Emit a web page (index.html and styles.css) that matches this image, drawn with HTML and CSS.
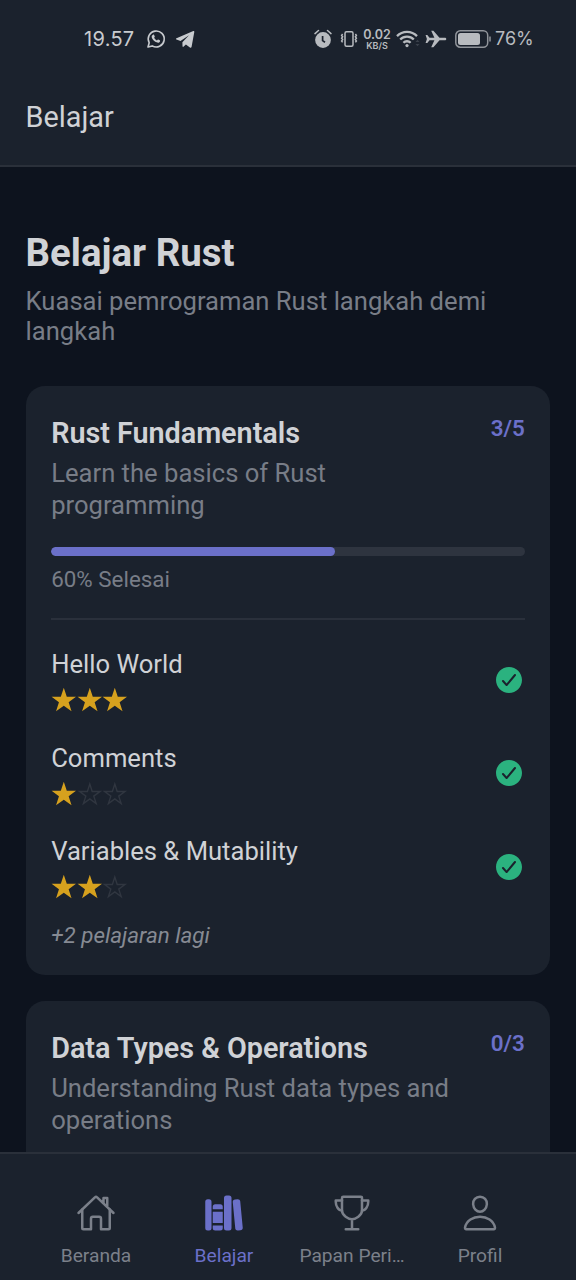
FILE: index.html
```html
<!DOCTYPE html>
<html lang="id">
<head>
<meta charset="utf-8">
<title>Belajar</title>
<link rel="stylesheet" href="styles.css">
</head>
<body>
<svg class="defs" aria-hidden="true">
  <symbol id="star" viewBox="0 0 512 512"><path fill="currentColor" d="M256 16l60 180h184L353 306l58 180L256 374 101 486l58-180L12 196h184z"/></symbol>
  <symbol id="star-o" viewBox="0 0 512 512"><path fill="none" stroke="currentColor" stroke-width="28" d="M256 60l48 150h156L335 302l49 150L256 358l-128 94 49-150L52 210h156z"/></symbol>
  <symbol id="check" viewBox="0 0 512 512"><path fill="currentColor" d="M256 48C141.310 48 48 141.310 48 256s93.310 208 208 208 208-93.310 208-208S370.690 48 256 48zm108.250 138.290l-134.400 160a16 16 0 01-12 5.710h-.27a16 16 0 01-11.890-5.300l-57.600-64a16 16 0 1123.780-21.400l45.290 50.320 122.590-145.910a16 16 0 0124.500 20.580z"/></symbol>
</svg>
<div class="screen">
  <div class="status">
    <div class="status-left">
      <span class="clock">19.57</span>
      <svg class="whatsapp" viewBox="0 0 20 20" width="20" height="20"><path d="M2 18l1.2-4.2A8 8 0 1 1 6.200 16.900z" fill="none" stroke="currentColor" stroke-width="1.6" stroke-linejoin="round"/><path d="M7 5.700c.5-.3.900-.2 1.100.2l.7 1.600c.1.400-.5.900-.7 1.200.6 1.200 1.600 2.200 2.900 2.700.4-.3.800-1 1.200-.9l1.600.8c.4.200.4.600.2 1.100-.5 1-1.600 1.500-2.700 1.200-2.900-.8-4.900-2.800-5.600-5.400-.2-1 .4-2 1.300-2.500z" fill="currentColor"/></svg>
      <svg class="telegram" viewBox="0 0 20 18" width="20" height="18"><path d="M18.300 1L1.500 8.300c-.8.400-.7.900 0 1.200l4 1.400L14 5.200l-6.600 7 .1 4c.1.800.7.900 1.200.4l2.200-2.100 4 2.900c.8.500 1.500.2 1.700-.7L19.300 1.900c.1-.8-.3-1.200-1-.9z" fill="currentColor"/></svg>
    </div>
    <div class="status-right">
      <svg class="alarm" viewBox="0 0 18 20" width="18" height="20"><circle cx="9" cy="11" r="7.900" fill="currentColor"/><path d="M1 4.600L4.500 1.500M17 4.600L13.500 1.500" stroke="currentColor" stroke-width="1.500" stroke-linecap="round"/><path d="M8.600 7v4.600l2.400 1.700" fill="none" stroke="#1b222d" stroke-width="1.700"/></svg>
      <svg class="vibrate" viewBox="0 0 18 18" width="18" height="18" fill="none" stroke="currentColor"><rect x="5" y="1.700" width="8" height="14.600" rx="1.500" stroke-width="1.500"/><path d="M2.600 4l-1 1.400 1 1.400-1 1.400 1 1.400-1 1.400 1 1.400M15.400 4l1 1.400-1 1.400 1 1.400-1 1.400 1 1.400-1 1.400" stroke-width="1.500"/></svg>
      <div class="speed"><span class="rate">0.02</span><span class="unit">KB/S</span></div>
      <svg class="wifi" viewBox="0 0 24 20" width="24" height="20" fill="none" stroke="currentColor" stroke-width="2.300"><path d="M1 7.100a14 14 0 0 1 20 0M4.200 10.500a9.500 9.500 0 0 1 13.600 0M7.400 13.800a5 5 0 0 1 7.200 0"/><circle cx="11" cy="16.600" r="1.600" fill="currentColor" stroke="none"/><path d="M19.500 13l2-2.200 2 2.200zM19.500 15l2 2.200 2-2.200z" fill="#3a414b" stroke="none"/></svg>
      <svg class="plane" viewBox="0 0 22 18" width="22" height="18"><path d="M21.300 9c0-.9-.7-1.300-1.600-1.300h-5.200L8.400.7H6.200l3.200 7H4.500L2.300 5.100H.600L1.900 9 .6 12.900h1.700l2.200-2.600h4.900l-3.200 7h2.200l6.100-7h5.200c.9 0 1.600-.4 1.600-1.300z" fill="currentColor"/></svg>
      <svg class="battery" viewBox="0 0 36 18" width="36" height="18"><rect x=".8" y=".8" width="31.900" height="16.400" rx="4.500" fill="none" stroke="currentColor" stroke-width="1.500" opacity=".75"/><rect x="3" y="3" width="22" height="12" rx="2.500" fill="currentColor"/><path d="M35 6.500v5" stroke="currentColor" stroke-width="1.500" opacity=".75"/></svg>
      <span class="percent">76%</span>
    </div>
  </div>
  <header class="appbar">Belajar</header>
  <main class="content">
    <h1 class="title">Belajar Rust</h1>
    <p class="subtitle">Kuasai pemrograman Rust langkah demi langkah</p>
    <section class="card">
      <div class="card-head">
        <div class="card-text">
          <h2 class="card-title">Rust Fundamentals</h2>
          <p class="card-desc">Learn the basics of Rust<br>programming</p>
        </div>
        <span class="count">3/5</span>
      </div>
      <div class="track"><div class="fill" style="width:60%"></div></div>
      <p class="progress">60% Selesai</p>
      <div class="lessons">
        <div class="lesson">
          <div class="lesson-info"><span class="lesson-name">Hello World</span>
            <div class="stars"><svg><use href="#star"/></svg><svg><use href="#star"/></svg><svg><use href="#star"/></svg></div></div>
          <svg class="check"><use href="#check"/></svg>
        </div>
        <div class="lesson">
          <div class="lesson-info"><span class="lesson-name">Comments</span>
            <div class="stars"><svg><use href="#star"/></svg><svg class="off"><use href="#star-o"/></svg><svg class="off"><use href="#star-o"/></svg></div></div>
          <svg class="check"><use href="#check"/></svg>
        </div>
        <div class="lesson">
          <div class="lesson-info"><span class="lesson-name">Variables &amp; Mutability</span>
            <div class="stars"><svg><use href="#star"/></svg><svg><use href="#star"/></svg><svg class="off"><use href="#star-o"/></svg></div></div>
          <svg class="check"><use href="#check"/></svg>
        </div>
      </div>
      <p class="more">+2 pelajaran lagi</p>
    </section>
    <section class="card">
      <div class="card-head">
        <div class="card-text">
          <h2 class="card-title">Data Types &amp; Operations</h2>
          <p class="card-desc">Understanding Rust data types and<br>operations</p>
        </div>
        <span class="count">0/3</span>
      </div>
    </section>
  </main>
  <nav class="tabs">
    <div class="tab">
      <svg class="tab-icon line" viewBox="0 0 512 512"><path d="M80 212v236a16 16 0 0016 16h96V328a24 24 0 0124-24h80a24 24 0 0124 24v136h96a16 16 0 0016-16V212"/><path d="M480 256L266.890 52c-5-5.280-16.690-5.340-21.780 0L32 256M400 179V64h-48v69"/></svg>
      <span class="tab-label">Beranda</span>
    </div>
    <div class="tab active">
      <svg class="tab-icon" viewBox="0 0 512 512" fill="currentColor"><path d="M64 480H48a32 32 0 01-32-32V112a32 32 0 0132-32h16a32 32 0 0132 32v336a32 32 0 01-32 32zM240 176a32 32 0 00-32-32h-64a32 32 0 00-32 32v28a4 4 0 004 4h120a4 4 0 004-4zM112 448a32 32 0 0032 32h64a32 32 0 0032-32v-30a2 2 0 00-2-2H114a2 2 0 00-2 2z"/><rect x="112" y="240" width="128" height="144" rx="2"/><path d="M320 480h-32a32 32 0 01-32-32V64a32 32 0 0132-32h32a32 32 0 0132 32v384a32 32 0 01-32 32zM495.890 445.450l-32.230-340c-1.480-15.650-16.940-27-34.530-25.310l-31.850 3c-17.590 1.670-30.650 15.710-29.170 31.360l32.230 340c1.480 15.650 16.940 27 34.530 25.310l31.850-3c17.590-1.670 30.650-15.710 29.170-31.360z"/></svg>
      <span class="tab-label">Belajar</span>
    </div>
    <div class="tab">
      <svg class="tab-icon line" viewBox="0 0 512 512"><path d="M176 464h160M256 464V336M384 224c0-50.640-.08-134.630-.12-160a16 16 0 00-16-16l-223.790.26a16 16 0 00-16 15.950c0 30.580-.13 129.170-.13 159.790 0 64.280 83 112 128 112S384 288.280 384 224z"/><path d="M128 96H48v16c0 55.220 33.550 112 80 112M384 96h80v16c0 55.220-33.550 112-80 112"/></svg>
      <span class="tab-label">Papan Peri…</span>
    </div>
    <div class="tab">
      <svg class="tab-icon line" viewBox="0 0 512 512"><path d="M344 144c-3.920 52.870-44 96-88 96s-84.150-43.120-88-96c-4-55 35-96 88-96s92 42 88 96z"/><path d="M256 304c-87 0-175.300 48-191.640 138.600C62.390 453.520 68.570 464 80 464h352c11.440 0 17.620-10.480 15.650-21.400C431.300 352 343 304 256 304z"/></svg>
      <span class="tab-label">Profil</span>
    </div>
  </nav>
</div>
</body>
</html>
```
FILE: styles.css
```css
* { box-sizing: border-box; }
body { margin: 0; background: #0d131e; font-family: Roboto, "Noto Sans", sans-serif; color: #d0d2d6; }
h1, h2, p { margin: 0; }
svg { display: block; flex: none; }
.defs { width: 0; height: 0; position: absolute; }
.screen { width: 576px; height: 1280px; display: flex; flex-direction: column; overflow: hidden; }

.status { height: 76px; flex: none; background: #1b222d; display: flex; justify-content: space-between; padding: 1px 44px 0 84px; color: #c8cbcf; }
.status-left, .status-right { display: flex; align-items: center; height: 76px; }
.status-right { color: #b8bbbf; }
.clock { font: 400 20px/24px Inter, sans-serif; letter-spacing: .3px; width: 50px; white-space: nowrap; }
.whatsapp { margin-left: 12px; }
.telegram { margin-left: 9px; }
.vibrate { margin-left: 8px; }
.speed { width: 28px; margin-left: 5px; display: flex; flex-direction: column; align-items: center; font-family: Inter, sans-serif; font-weight: 600; white-space: nowrap; }
.rate { font-size: 12.5px; line-height: 12px; }
.unit { font-size: 9px; line-height: 9px; }
.wifi { margin-left: 5px; }
.plane { margin-left: 5px; }
.battery { margin-left: 8px; }
.percent { font: 400 18px/24px Inter, sans-serif; margin-left: 4px; width: 37px; white-space: nowrap; }

.appbar { height: 91px; flex: none; background: #1b222d; border-bottom: 2px solid #2a303a; padding: 24px 25.600px 0; font-size: 28.800px; line-height: 34px; }

.content { flex: 1; min-height: 0; overflow: hidden; padding: 63px 25.600px 0; }
.title { font-size: 38.400px; line-height: 46px; font-weight: 700; }
.subtitle { margin-top: 10px; font-size: 25.600px; line-height: 30px; color: #787d87; }
.card { background: #1b222d; border-radius: 19px; padding: 26px 25.600px; height: 589px; margin-bottom: 26px; }
.subtitle + .card { margin-top: 40px; }
.card-head { display: flex; justify-content: space-between; }
.card-title { font-size: 28.800px; line-height: 42px; font-weight: 600; letter-spacing: -.04px; white-space: nowrap; }
.card-desc { margin-top: 3px; font-size: 25.600px; line-height: 32px; color: #787d87; white-space: nowrap; }
.count { font-size: 22.400px; line-height: 32px; font-weight: 600; color: #6b70c9; }
.track { margin-top: 26px; height: 9px; border-radius: 5px; background: #2e343f; overflow: hidden; }
.fill { height: 100%; border-radius: 5px; background: #6b70c9; }
.progress { margin-top: 9px; font-size: 22.400px; line-height: 28px; color: #787d87; }
.lessons { margin-top: 25px; border-top: 2px solid #2a303b; padding-top: 28px; display: flex; flex-direction: column; gap: 29.400px; }
.lesson { height: 64px; display: flex; align-items: center; justify-content: space-between; }
.lesson-info { display: flex; flex-direction: column; gap: 7px; padding-top: 1px; }
.lesson-name { font-size: 25.600px; line-height: 32px; white-space: nowrap; }
.stars { display: flex; color: #d6a11e; }
.stars svg { width: 25.600px; height: 25.600px; }
.stars .off { color: #303640; }
.check { width: 32px; height: 32px; color: #2bb27f; }
.more { margin-top: 22px; font-size: 22.400px; line-height: 28px; font-style: italic; color: #868a93; }

.tabs { height: 128px; flex: none; background: #1b222d; border-top: 2px solid #2a303a; display: flex; padding: 0 32px; }
.tab { flex: 1; padding-top: 39px; display: flex; flex-direction: column; align-items: center; gap: 11px; color: #7b808a; }
.tab.active { color: #6b70c9; }
.tab-icon { width: 40px; height: 40px; }
.line { fill: none; stroke: currentColor; stroke-width: 32; stroke-linecap: round; stroke-linejoin: round; }
.tab-label { font-size: 19.200px; line-height: 24px; white-space: nowrap; }
```
